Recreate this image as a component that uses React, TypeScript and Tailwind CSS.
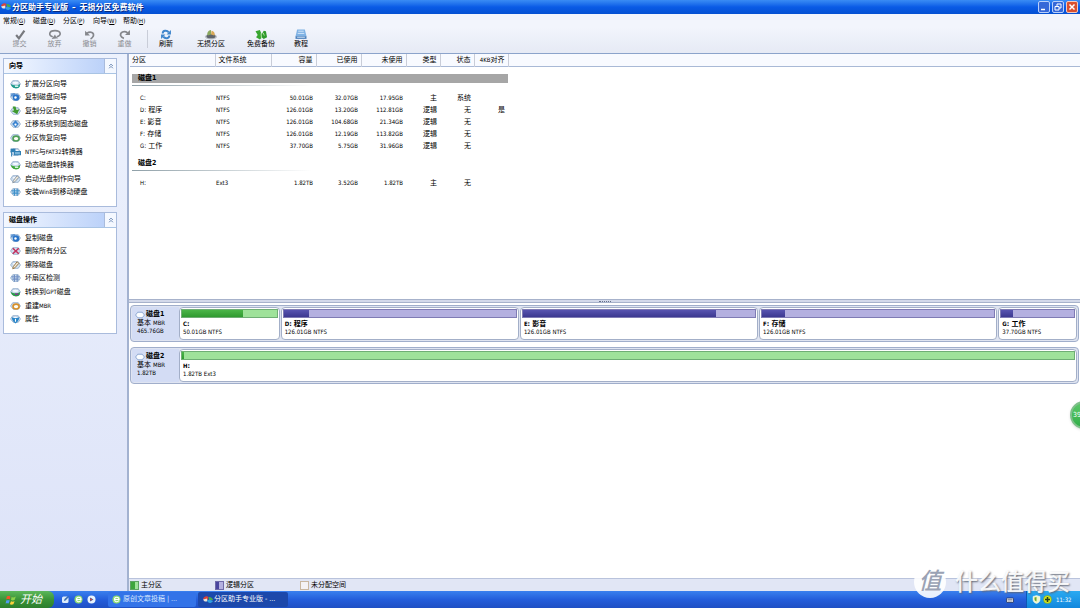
import type { ReactNode } from "react";

type Partition = {
  name: string;
  fs: string;
  size: string;
  used: string;
  free: string;
  type: string;
  status: string;
  aligned?: string;
  grow: number;
  percent: number;
};

type Disk = { name: string; size: string; selected?: boolean; partitions: Partition[] };

const disks: Disk[] = [
  {
    name: "磁盘1",
    size: "465.76GB",
    selected: true,
    partitions: [
      { name: "C:", fs: "NTFS", size: "50.01GB", used: "32.07GB", free: "17.95GB", type: "主", status: "系统", grow: 97, percent: 64 },
      { name: "D: 程序", fs: "NTFS", size: "126.01GB", used: "13.20GB", free: "112.81GB", type: "逻辑", status: "无", aligned: "是", grow: 235, percent: 11 },
      { name: "E: 影音", fs: "NTFS", size: "126.01GB", used: "104.68GB", free: "21.34GB", type: "逻辑", status: "无", grow: 235, percent: 83 },
      { name: "F: 存储", fs: "NTFS", size: "126.01GB", used: "12.19GB", free: "113.82GB", type: "逻辑", status: "无", grow: 235, percent: 10 },
      { name: "G: 工作", fs: "NTFS", size: "37.70GB", used: "5.75GB", free: "31.96GB", type: "逻辑", status: "无", grow: 75, percent: 16 },
    ],
  },
  {
    name: "磁盘2",
    size: "1.82TB",
    partitions: [
      { name: "H:", fs: "Ext3", size: "1.82TB", used: "3.52GB", free: "1.82TB", type: "主", status: "无", grow: 1, percent: 0.2 },
    ],
  },
];

const menus = [
  { label: "常规", key: "G" },
  { label: "磁盘", key: "D" },
  { label: "分区", key: "P" },
  { label: "向导", key: "W" },
  { label: "帮助", key: "H" },
];

const wizards = [
  { label: "扩展分区向导", icon: <DiskIcon color="#1f9a8c" badge="half" /> },
  { label: "复制磁盘向导", icon: <DiskIcon color="#2a74c8" badge="copy" /> },
  { label: "复制分区向导", icon: <DiskIcon color="#3f9a2e" badge="down" /> },
  { label: "迁移系统到固态磁盘", icon: <DiskIcon color="#3a83d0" badge="dot" /> },
  { label: "分区恢复向导", icon: <DiskIcon color="#4f9f58" badge="ring" /> },
  { label: "NTFS与FAT32转换器", icon: <DiskIcon color="#2f7fb4" badge="flag" /> },
  { label: "动态磁盘转换器", icon: <DiskIcon color="#3fa83a" badge="half" /> },
  { label: "启动光盘制作向导", icon: <DiskIcon color="#8d99a6" badge="pen" /> },
  { label: "安装Win8到移动硬盘", icon: <DiskIcon color="#3b8fc9" badge="grid" /> },
];

const diskActions = [
  { label: "复制磁盘", icon: <DiskIcon color="#2a74c8" badge="copy" /> },
  { label: "删除所有分区", icon: <DiskIcon color="#c2315e" badge="cross" /> },
  { label: "擦除磁盘", icon: <DiskIcon color="#9c7a48" badge="pen" /> },
  { label: "坏扇区检测", icon: <DiskIcon color="#6f8fc4" badge="grid" /> },
  { label: "转换到GPT磁盘", icon: <DiskIcon color="#2b9a4a" badge="half" accent="#8a2f9a" /> },
  { label: "重建MBR", icon: <DiskIcon color="#d8902a" badge="ring" /> },
  { label: "属性", icon: <DiskIcon color="#2b86c8" badge="shield" /> },
];

type Badge = "half" | "copy" | "down" | "dot" | "ring" | "flag" | "pen" | "grid" | "cross" | "shield";

function DiskIcon({ color, badge, accent }: { color: string; badge: Badge; accent?: string }) {
  return (
    <svg viewBox="0 0 20 18" className="h-[10px] w-[11px] shrink-0" aria-hidden="true">
      <path d="M1 9 5 3h10l4 6-4 6H6z" fill="#d3e4f3" stroke="#7f9fc0" strokeWidth="1.3" />
      <ellipse cx="10" cy="7" rx="6" ry="3" fill="#f4f9ff" stroke="#a5bcd6" />
      {badge === "half" && (
        <>
          <path d="M2 9c4 3 12 3 16 0v4c-2 5-10 5-13 2-2-1-3-3-3-6z" fill={color} />
          <path d="M9 13h6" stroke={accent ?? "#eafff4"} strokeWidth="2.500" />
        </>
      )}
      {badge === "copy" && (
        <>
          <path d="M1 2h8v6H1z" fill={color} opacity=".6" />
          <circle cx="11" cy="10" r="6" fill={color} />
          <circle cx="10" cy="10" r="2.200" fill="#fff" />
        </>
      )}
      {badge === "down" && <path d="M5 1h5l2 6 5-1-4 9-10-6 4-1z" fill={color} />}
      {badge === "dot" && (
        <>
          <path d="m10 2 6 7-6 7-6-7z" fill={color} />
          <circle cx="10" cy="10" r="2" fill="#fff" />
        </>
      )}
      {badge === "ring" && <ellipse cx="11" cy="10" rx="5.500" ry="4.500" fill="#fdfdf4" stroke={color} strokeWidth="3" />}
      {badge === "flag" && (
        <>
          <path d="M1 3h9v6H1z" fill={color} />
          <path d="M3 17V3M8 8h11v6H8z" fill="#79b3d8" stroke={color} strokeWidth="2" />
        </>
      )}
      {badge === "pen" && <path d="m6 12 7-9 3 3-7 8-4 2z" fill="#f2ead8" stroke={color} strokeWidth="1.800" />}
      {badge === "grid" && <path d="M3 7h14M4 11h12M8 3v13M13 3v13" stroke={color} strokeWidth="2" />}
      {badge === "cross" && <path d="m5 4 11 10M16 4 5 14" stroke={color} strokeWidth="3" />}
      {badge === "shield" && (
        <>
          <path d="M3 6c5 2 9 2 14 0-1 6-3 9-7 11-4-2-6-5-7-11z" fill={color} />
          <path d="M10 9v5" stroke="#fff" strokeWidth="2" />
        </>
      )}
    </svg>
  );
}

function AppLogo() {
  return (
    <svg viewBox="0 0 20 20" className="size-[10px] shrink-0" aria-hidden="true">
      <path d="M0 8c2-6 8-7 11-4L9 10z" fill="#d9443a" />
      <path d="M0 9c3 5 6 5 9 3L8 7z" fill="#e9e4da" />
      <path d="M11 4c4-1 9 2 9 6l-8 1z" fill="#4aa84a" />
      <path d="M8 11c2 6 8 7 12 1l-7-3z" fill="#2f9ee0" />
    </svg>
  );
}

// Latin letters and digits are set one pixel smaller than the Chinese text
function Mixed({ text }: { text: string }) {
  return (
    <>
      {text.split(/([A-Za-z0-9]+)/).map((part, i) =>
        /^[A-Za-z0-9]+$/.test(part) ? (
          <span key={i} className="text-[6px]">{part}</span>
        ) : (
          part
        )
      )}
    </>
  );
}

function ToolButton({ label, width, disabled, children }: { label: string; width: string; disabled?: boolean; children: ReactNode }) {
  return (
    <button
      type="button"
      disabled={disabled}
      className={`${width} flex flex-col items-center justify-end leading-[8px] ${disabled ? "text-[#8a8c92]" : "text-black"}`}
    >
      <svg viewBox="0 0 24 20" className="h-[11px] w-[14px]" fill="none" aria-hidden="true">
        {children}
      </svg>
      {label}
    </button>
  );
}

function SidePanel({ title, items, listHeight }: { title: string; items: { label: string; icon: ReactNode }[]; listHeight: string }) {
  return (
    <section className="border border-[#a9bbdc] bg-white">
      <div className="flex h-[15px] border-b border-[#a9c4e4] bg-linear-to-r from-[#f4f8ff] to-[#b5cdf8]">
        <h2 className="flex-1 pl-[5px] text-[7px] leading-[15px] font-bold">{title}</h2>
        <button type="button" aria-label={`折叠${title}`} className="flex w-[12px] items-center justify-center border-l border-[#a9bbdc] bg-[#f4f8ff]">
          <svg viewBox="0 0 8 8" className="size-[6px]" fill="none" stroke="#45689c">
            <path d="m1.500 4 2.500-2.500L6.500 4M1.500 7 4 4.500 6.500 7" />
          </svg>
        </button>
      </div>
      <ul className={`${listHeight} mt-[3px] mb-[7px] grid auto-rows-fr`}>
        {items.map((item) => (
          <li key={item.label} className="flex items-center">
            <button type="button" className="flex items-center gap-[4px] pl-[6px] leading-[12px] whitespace-nowrap">
              {item.icon}
              <span>
                <Mixed text={item.label} />
              </span>
            </button>
          </li>
        ))}
      </ul>
    </section>
  );
}

function PartitionTable() {
  const th = "border-r border-[#c9cdd8] font-normal";
  return (
    <table className="w-full table-fixed border-collapse leading-[10px]">
      <colgroup>
        <col className="w-[85px]" />
        <col className="w-[56px]" />
        <col className="w-[45px]" />
        <col className="w-[45px]" />
        <col className="w-[45px]" />
        <col className="w-[34px]" />
        <col className="w-[34px]" />
        <col className="w-[34px]" />
        <col />
      </colgroup>
      <thead>
        <tr className="h-[12px] border-b border-[#a9b9d6] bg-[#f8faff] text-right">
          <th scope="col" className={`${th} pl-[2px] text-left`}>分区</th>
          <th scope="col" className={`${th} pl-[3px] text-left`}>文件系统</th>
          <th scope="col" className={`${th} pr-[3px]`}>容量</th>
          <th scope="col" className={`${th} pr-[3px]`}>已使用</th>
          <th scope="col" className={`${th} pr-[3px]`}>未使用</th>
          <th scope="col" className={`${th} pr-[3px]`}>类型</th>
          <th scope="col" className={`${th} pr-[3px]`}>状态</th>
          <th scope="col" className={`${th} pr-[3px] whitespace-nowrap`}><Mixed text="4KB对齐" /></th>
          <td />
        </tr>
      </thead>
      {disks.map((disk) => (
        <tbody key={disk.name}>
          <tr className="h-[25px]">
            <th scope="rowgroup" colSpan={8} className="pt-[7px] pb-[6px] pl-[2px] text-left">
              <div className={`h-[9px] pl-[6px] leading-[9px] ${disk.selected ? "bg-[#a6a6a6]" : ""}`}>{disk.name}</div>
              <div className="mt-[2px] h-px w-[180px] bg-linear-to-r from-[#8fa0a8] to-white" />
            </th>
            <td />
          </tr>
          {disk.partitions.map((p) => (
            <tr key={p.name} className="h-[12px] text-right">
              <td className="pl-[10px] text-left"><Mixed text={p.name} /></td>
              <td className="pl-[1px] text-left text-[6px]">{p.fs}</td>
              <td className="pr-[3px] text-[6px]">{p.size}</td>
              <td className="pr-[3px] text-[6px]">{p.used}</td>
              <td className="pr-[3px] text-[6px]">{p.free}</td>
              <td className="pr-[3px]">{p.type}</td>
              <td className="pr-[3px]">{p.status}</td>
              <td className="pr-[3px]">{p.aligned}</td>
              <td />
            </tr>
          ))}
        </tbody>
      ))}
    </table>
  );
}

function PartitionBlock({ partition }: { partition: Partition }) {
  const primary = partition.type === "主";
  return (
    <div
      className="min-w-0 basis-0 rounded-[4px] border border-[#a3afc8] bg-white px-px pt-px leading-[8px] whitespace-nowrap"
      style={{ flexGrow: partition.grow }}
    >
      <div className={`h-[9px] border ${primary ? "border-[#6fae74] bg-[#9fe29a]" : "border-[#7f7bb4] bg-[#b4b0e0]"}`}>
        <div
          className={`h-full ${primary ? "bg-linear-to-b from-[#4bb548] to-[#2f9a30]" : "bg-linear-to-b from-[#5854b0] to-[#3c3890]"}`}
          style={{ width: `${partition.percent}%` }}
        />
      </div>
      <div className="pt-[2px] pl-[2px] font-bold"><Mixed text={partition.name} /></div>
      <div className="pl-[2px] text-[6px]">
        {partition.size} {partition.fs}
      </div>
    </div>
  );
}

function DiskMap({ disk }: { disk: Disk }) {
  return (
    <div className="flex h-[37px] rounded-[4px] border border-[#a0aecb] bg-[#dfe4f1] p-px">
      <div className="w-[47px] shrink-0 bg-[#d3dcf4] pt-[3px] pl-[3px] leading-[9px]">
        <div className="flex items-center gap-px font-bold">
          <svg viewBox="0 0 18 14" className="h-[8px] w-[10px]" aria-hidden="true">
            <path d="M1 7 5 2h8l4 5-4 5H5z" fill="#fbfdff" stroke="#7e9ccb" strokeWidth="1.5" />
          </svg>
          {disk.name}
        </div>
        <div className="pl-[2px] leading-[8px]">
          基本 <span className="text-[6px]">MBR</span>
        </div>
        <div className="pl-[2px] text-[6px] leading-[8px]">{disk.size}</div>
      </div>
      <div className="flex min-w-0 flex-1 gap-px">
        {disk.partitions.map((p) => (
          <PartitionBlock key={p.name} partition={p} />
        ))}
      </div>
    </div>
  );
}

function LegendItem({ label, swatch }: { label: string; swatch: string }) {
  return (
    <div className="flex w-[85px] items-center gap-[2px]">
      <span className={`size-[9px] border ${swatch}`} />
      {label}
    </div>
  );
}

function BrowserIcon() {
  return (
    <svg viewBox="0 0 18 18" className="size-[9px] shrink-0" aria-hidden="true">
      <circle cx="9" cy="9" r="8" fill="#8fdc74" />
      <path d="M5 9h9c0-6-9-6-9 0 0 5 6 6 9 2" fill="none" stroke="#fff" strokeWidth="2.200" />
    </svg>
  );
}

function Taskbar() {
  return (
    <footer className="flex h-[17px] items-stretch bg-linear-to-b from-[#3a80ee] via-[#245edb] to-[#1f50c4] text-white">
      <button type="button" className="flex w-[54px] items-center gap-[3px] rounded-r-[6px] bg-linear-to-b from-[#5cb85a] via-[#3a9438] to-[#2c7f2d] pl-[5px] text-[11px] leading-[16px] italic">
        <svg viewBox="0 0 20 20" className="size-[12px]" aria-hidden="true">
          <path d="M3 4c2-1 4-1 6 0L8 9c-2-1-4-1-6 0z" fill="#f0552c" />
          <path d="M11 5c2 1 4 1 7-1l-2 6c-2 1-4 1-6 0z" fill="#8cd04a" />
          <path d="M2 11c2-1 4-1 6 0l-2 5c-2-1-3-1-5 0z" fill="#4f9bf0" />
          <path d="M10 12c2 1 4 1 6 0l-2 5c-2 1-4 1-6 0z" fill="#fbd13c" />
        </svg>
        开始
      </button>
      <div className="flex w-[54px] items-center gap-[4px] pl-[7px]">
        <button type="button" aria-label="显示桌面">
          <svg viewBox="0 0 18 18" className="size-[9px]">
            <rect x="2" y="3" width="13" height="13" rx="3" fill="#dcebfa" />
            <path d="m6 12 1-4 7-6 2 2-7 7z" fill="#3a6cb0" />
          </svg>
        </button>
        <button type="button" aria-label="浏览器">
          <BrowserIcon />
        </button>
        <button type="button" aria-label="播放器">
          <svg viewBox="0 0 18 18" className="size-[9px]">
            <circle cx="9" cy="9" r="8" fill="#e8f3fc" />
            <path d="m6 5 7 4-7 4z" fill="#3a62a8" />
            <circle cx="8" cy="9" r="2" fill="#d3483c" />
          </svg>
        </button>
      </div>
      <button type="button" className="my-px flex w-[88px] items-center gap-[2px] rounded-[2px] bg-[#3373e8] pl-[4px] text-[#d9e8ff]">
        <BrowserIcon />
        原创文章投稿 | ...
      </button>
      <button type="button" className="my-px ml-[2px] flex w-[90px] items-center gap-px rounded-[2px] bg-[#1c48ab] pl-[5px]">
        <AppLogo />
        分区助手专业版 - ...
      </button>
      <div className="ml-auto flex items-center">
        <button type="button" aria-label="输入法" className="mr-[12px]">
          <svg viewBox="0 0 16 12" className="h-[6px] w-[8px]">
            <rect x="1" y="2" width="14" height="9" rx="1" fill="#e6e6ea" stroke="#1a2f66" strokeWidth="1.5" />
            <path d="M3 5h10M3 8h10" stroke="#39435f" />
          </svg>
        </button>
        <div className="flex h-full w-[54px] items-center gap-[2px] border-l border-[#0f57b5] bg-linear-to-b from-[#2aaaf2] to-[#1187dd] pl-[5px]">
          <svg viewBox="0 0 18 18" className="size-[9px]" aria-hidden="true">
            <path d="M9 1 16 3v6c0 4-3 7-7 8-4-1-7-4-7-8V3z" fill="#f1f7c8" stroke="#eff5ff" />
            <path d="M9 4v9c-3-1-4-3-4-5V5z" fill="#6fa62c" />
          </svg>
          <svg viewBox="0 0 18 18" className="size-[9px]" aria-hidden="true">
            <circle cx="9" cy="9" r="8" fill="#d9e321" stroke="#5b9a1c" />
            <path d="M9 4v10M4 9h10" stroke="#22401a" strokeWidth="3" />
          </svg>
          <time className="pl-[2px] text-[6px]">11:32</time>
        </div>
      </div>
    </footer>
  );
}

export default function App() {
  return (
    <div className="relative flex h-screen flex-col overflow-hidden bg-white font-['DejaVu_Sans_Condensed','Liberation_Sans','Noto_Sans_CJK_SC',sans-serif] text-[7px] text-black">
      <header className="flex h-[14px] items-center bg-linear-to-b from-[#3a8cf4] via-[#0a5be6] to-[#0450d2] pr-[2px] pl-px text-white">
        <AppLogo />
        <h1 className="flex flex-1 gap-[4px] pl-px text-[8px] leading-[13px] font-bold [text-shadow:1px_1px_0_#0a2a7a]">
          <span>分区助手专业版</span>
          <span>–</span>
          <span>无损分区免费软件</span>
        </h1>
        <div className="flex gap-[2px]">
          <button type="button" aria-label="最小化" className="size-[12px] rounded-[2px] border border-[#b9d0fa] bg-[#3668d8]">
            <svg viewBox="0 0 10 10" className="size-full"><path d="M2 7.500h4" stroke="#fff" strokeWidth="1.500" /></svg>
          </button>
          <button type="button" aria-label="还原" className="size-[12px] rounded-[2px] border border-[#b9d0fa] bg-[#3668d8]">
            <svg viewBox="0 0 10 10" className="size-full" fill="none" stroke="#fff"><path d="M4 4V2h4v4H6M2 4.500h4V8H2z" /></svg>
          </button>
          <button type="button" aria-label="关闭" className="size-[12px] rounded-[2px] border border-[#f3c9bd] bg-[#d9502f]">
            <svg viewBox="0 0 10 10" className="size-full" stroke="#fff" strokeWidth="1.500"><path d="m2.500 2.500 5 5M7.500 2.500l-5 5" /></svg>
          </button>
        </div>
      </header>

      <nav className="flex h-[13px] items-center bg-[#f2f5fc] pl-[3px]">
        {menus.map((menu) => (
          <button key={menu.key} type="button" className="w-[30px] text-left leading-[12px]">
            {menu.label}
            <span className="text-[6px]">
              (<u>{menu.key}</u>)
            </span>
          </button>
        ))}
      </nav>

      <div className="flex h-[27px] border-b border-[#8ba3cb] bg-linear-to-b from-[#f2f5fc] to-[#e6eaf5] pb-[5px] pl-[2px]">
        <ToolButton label="提交" width="w-[35px]" disabled>
          <path d="m5 11 5 6L20 3" stroke="#77797e" strokeWidth="4" />
        </ToolButton>
        <ToolButton label="放弃" width="w-[35px]" disabled>
          <path d="M8 14C0 13 0 3 12 3s12 10 3 11" stroke="#85878c" strokeWidth="3" />
          <path d="m6 18 6-8 2 4 4 3z" fill="#85878c" />
        </ToolButton>
        <ToolButton label="撤销" width="w-[35px]" disabled>
          <path d="M6 8c7-5 14-1 12 5-1 2-3 4-5 5" stroke="#85878c" strokeWidth="3" />
          <path d="M3 3v9h9z" fill="#85878c" />
        </ToolButton>
        <ToolButton label="重做" width="w-[35px]" disabled>
          <path d="M17 7C10 2 3 6 4 12c1 3 3 4 6 5" stroke="#85878c" strokeWidth="3" />
          <path d="M21 2v9h-9z" fill="#85878c" />
        </ToolButton>
        <div className="mt-[3px] ml-[5px] w-px bg-[#c9cdd8]" />
        <ToolButton label="刷新" width="w-[36px]">
          <path d="M6 8c0-6 8-6 11-2M18 12c0 6-8 6-11 2" stroke="#3f86cc" strokeWidth="3.500" />
          <path d="M21 2v8h-8zM3 18v-8h8z" fill="#3f86cc" />
        </ToolButton>
        <ToolButton label="无损分区" width="w-[54px]">
          <ellipse cx="12" cy="14" rx="11" ry="5" fill="#b9bec4" />
          <ellipse cx="12" cy="13" rx="8" ry="4" fill="#5f656c" />
          <path d="M12 2v8l-6 2c-2-4 0-9 6-10z" fill="#8aa85e" />
          <path d="M13 3c5 1 7 6 5 9l-6-2z" fill="#d9a857" />
        </ToolButton>
        <ToolButton label="免费备份" width="w-[46px]">
          <path d="m2 4 8-2 3 7 1 6-4 4-7-4 3-4z" fill="#37a52f" />
          <path d="m13 10 4-7 4 1 2 11-6 3-4-3z" fill="#2f9a2c" />
          <path d="m12 8 1 9M16 7l2 5" stroke="#c6eeb4" strokeWidth="1.500" />
        </ToolButton>
        <ToolButton label="教程" width="w-[34px]">
          <path d="M5 1h14l3 12H2z" fill="#7fb2e4" />
          <path d="M2 13h20v5H2z" fill="#4f82bd" />
          <path d="M7 4h10M6 8h12M5 15h14" stroke="#e3f0fc" strokeWidth="1.500" />
        </ToolButton>
      </div>

      <div className="flex min-h-0 flex-1">
        <aside className="flex w-[129px] shrink-0 flex-col gap-[5px] border-r-2 border-[#a3b2d0] bg-linear-to-b from-[#edf2fd] to-[#dde3f8] pt-[4px] pr-[10px] pl-[3px]">
          <SidePanel title="向导" items={wizards} listHeight="h-[122px]" />
          <SidePanel title="磁盘操作" items={diskActions} listHeight="h-[95px]" />
        </aside>

        <main className="flex min-w-0 flex-1 flex-col">
          <div className="h-[245px] overflow-hidden pl-px">
            <PartitionTable />
          </div>
          <div className="flex h-[4px] items-center justify-center border-y border-[#a7b2cb] bg-[#d3d9ea]">
            <span className="w-[12px] border-t border-dotted border-[#66708a]" />
          </div>
          <div className="flex flex-1 flex-col gap-[5px] pt-[2px] pr-px pl-px">
            {disks.map((disk) => (
              <DiskMap key={disk.name} disk={disk} />
            ))}
          </div>
          <div className="flex h-[13px] items-center border-t border-[#b9c3dc] bg-[#e1e6f5] pl-px">
            <LegendItem label="主分区" swatch="border-[#5da263] bg-linear-to-r from-[#3da53c] from-50% to-[#9fe29a] to-50%" />
            <LegendItem label="逻辑分区" swatch="border-[#6f6ba8] bg-linear-to-r from-[#4a469e] from-50% to-[#b4b0e0] to-50%" />
            <LegendItem label="未分配空间" swatch="border-[#c9b7a0] bg-[#f4f2f4]" />
          </div>
        </main>
      </div>

      <Taskbar />

      {/* floating speed ball, half outside the right edge */}
      <button type="button" className="absolute top-[401px] -right-[18px] size-[28px] rounded-full border-2 border-[#7fbf8a] bg-linear-to-b from-[#5cc86a] to-[#2fae48] pl-px text-left text-[7px] text-white shadow">
        39
      </button>

      <div className="pointer-events-none absolute right-[10px] bottom-[10px] flex items-center gap-[9px] text-[23px] leading-[32px] font-medium text-white/90 [text-shadow:1px_1px_2px_#5f6675]">
        <span className="size-[32px] rounded-full bg-white/90 text-center text-[23px] leading-[31px] text-[#9aa2b4] italic [text-shadow:none]">值</span>
        <span>什么值得买</span>
      </div>
    </div>
  );
}
